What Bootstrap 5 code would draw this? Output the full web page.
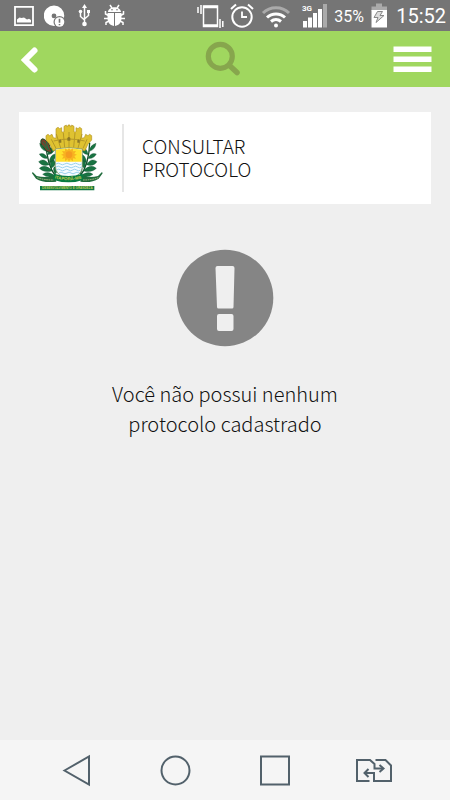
<!DOCTYPE html>
<html lang="pt-BR">
<head>
<meta charset="utf-8">
<meta name="viewport" content="width=device-width, initial-scale=1">
<title>Consultar Protocolo</title>
<link rel="stylesheet" href="https://cdn.jsdelivr.net/npm/bootstrap@5.3.0/dist/css/bootstrap.min.css">
<style>
body{background:#efefef;color:#222;font-family:"Noto Sans CJK SC","Noto Sans",sans-serif}
svg{display:block;flex:none}
.status{background:#757575;color:#fff;height:31px;padding:0 4px 0 14px;font-family:Roboto,sans-serif;line-height:31px}
.status-left{gap:10px}
.status-right{gap:6px}
.battery-level{font-size:16px;width:31px;padding-top:1px}
.clock{font-size:20px;padding-top:1px}
.topbar{background:#a0d75f;height:56px;padding:0 18px}
.panel{margin:25px 19px 0;height:92px;padding:0 12px 0 7px}
.panel-title{font-size:19px;line-height:23px;font-weight:300;color:#111;border-left:2px solid #e6e6e6;margin-left:12px;padding:10px 18px 12px}
.notice{padding-top:45px}
.notice-text{font-size:20px;line-height:30px;font-weight:300;color:#111;max-width:260px;margin-top:32px}
.softkeys{background:#f5f5f5;height:60px;padding:0 27px}
</style>
<script src="https://cdn.jsdelivr.net/npm/bootstrap@5.3.0/dist/js/bootstrap.bundle.min.js" defer></script>
</head>
<body class="d-flex flex-column min-vh-100">

<div class="status d-flex justify-content-between">
  <div class="status-left d-flex">
    <svg width="20" height="31" viewBox="14 0 20 31" fill="#fff" aria-hidden="true"><path d="M15 6.800h18v18.400H15z" fill="none" stroke="#fff" stroke-width="1.800"/><path d="M17 22.500v-3l2.500-2 2 .5 2.500-.5 3 2 2-.8 2 1.300v2.500z"/></svg>
    <svg width="21" height="31" viewBox="44 0 21 31" aria-hidden="true"><path fill="#fff" fill-rule="evenodd" d="M54 5.500a10 10 0 1 0 0 20.500 10 10 0 1 0 0-20.500zM54 13.500a2.400 2.400 0 1 1 0 4.800 2.400 2.400 0 1 1 0-4.800z"/><circle cx="59.500" cy="22" r="6" fill="#757575"/><circle cx="59.500" cy="22" r="4.800" fill="#fff"/><path d="M59.500 18.800v4M59.500 24v1.300" stroke="#757575" stroke-width="1.600"/></svg>
    <svg width="19" height="31" viewBox="75 0 19 31" fill="none" stroke="#fff" stroke-width="1.500" aria-hidden="true"><path d="M84.500 7v17M80.500 12v4.500l4 3.500M88.500 12v3.500l-4 3.500"/><path d="M84.500 4l2.500 4h-5zM87 10h3v3h-3z" fill="#fff" stroke="none"/><circle cx="80.500" cy="11.500" r="1.800" fill="#fff" stroke="none"/><circle cx="84.500" cy="24" r="2.300" fill="#fff" stroke="none"/></svg>
    <svg width="21" height="31" viewBox="104 0 21 31" fill="#fff" aria-hidden="true"><path d="M108 12c.3-6.500 12.700-6.500 13 0zM107.500 13h6.500v13c-4.500-.8-6.500-4-6.500-8zM115 13h6.500v5c0 4-2 7.200-6.500 8z"/><path d="M110 5l2 3M119 5l-2 3M108.500 15.500l-3-1.500v-3M108.500 18.500H104M109 21l-3 1.500v2.500M120.500 15.500l3-1.500v-3M120.500 18.500h4.500M120 21l3 1.500v2.500" fill="none" stroke="#fff" stroke-width="1.500"/><circle cx="112" cy="9.800" r=".8" fill="#757575"/><circle cx="117" cy="9.800" r=".8" fill="#757575"/></svg>
  </div>
  <div class="status-right d-flex">
    <svg width="27" height="31" viewBox="197 0 27 31" fill="none" stroke="#fff" stroke-width="1.500" aria-hidden="true"><rect x="203.500" y="6" width="14" height="20.500"/><path d="M203.500 7h14M203.500 25.500h14" stroke-width="2.500"/><path d="M198 7v6M201 5v9M220 19v9M222.800 21v6"/></svg>
    <svg width="24" height="31" viewBox="230 0 24 31" fill="none" stroke="#fff" stroke-width="2" aria-hidden="true"><circle cx="242" cy="17" r="9.700"/><path d="M242 11.500V17h5" stroke-width="1.800"/><path d="M231 9l5-4.500M253 9l-5-4.500"/></svg>
    <svg width="33" height="31" viewBox="260 0 33 31" fill="none" stroke="#fff" stroke-width="3" aria-hidden="true"><path d="M263 13c7-7 19-7 26 0" stroke="#aaa"/><path d="M267 17.500c5-4.800 13-4.800 18 0M271 21.500c3-2.600 7-2.600 10 0"/><circle cx="276" cy="25.500" r="2" fill="#fff" stroke="none"/></svg>
    <svg width="29" height="31" viewBox="299 0 29 31" fill="#fff" aria-hidden="true"><path d="M303 21h4v6.500h-4zM308 17.500h4v10h-4zM313 13h4v14.500h-4zM318 9h4v18.500h-4z"/><path fill="#aaa" d="M323 4h4v23.500h-4z"/><text x="302" y="11" font-size="8" font-weight="700" font-family="Roboto,sans-serif">3G</text></svg>
    <span class="battery-level">35%</span>
    <svg width="19" height="31" viewBox="370 0 19 31" aria-hidden="true"><path fill="#aaa" d="M375 3.500h6v3h5V11h-15.500V6.500h4.500z"/><path fill="#fff" d="M370.500 10H386v17.500h-15.500z"/><path d="M376.500 11.500h5l-2.500 4h4l-8 7 2-5h-4z" fill="#ddd" stroke="#888" stroke-width="1"/></svg>
    <time class="clock">15:52</time>
  </div>
</div>

<nav class="topbar d-flex align-items-center justify-content-between" aria-label="Principal">
  <button class="btn p-0 border-0" type="button" aria-label="Voltar"><svg width="40" height="40" viewBox="18 39 40 40" fill="none" stroke="#fff" stroke-width="6"><path d="M34.500 50.500L25 60l9.500 9.500" stroke-linecap="round"/></svg></button>
  <button class="btn p-0 border-0" type="button" aria-label="Buscar"><svg width="40" height="40" viewBox="205 39 40 40" fill="none" stroke="#87a64d"><circle cx="220.300" cy="56.300" r="12" stroke-width="5.200"/><path d="M229.500 65.500l7.500 7" stroke-width="5.500" stroke-linecap="round"/></svg></button>
  <button class="btn p-0 border-0" type="button" aria-label="Menu"><svg width="40" height="40" viewBox="392 39 40 40" fill="#fff"><path d="M393.500 46.500h38V52h-38zM393.500 56.500h38V62h-38zM393.500 66.500h38V72h-38z"/></svg></button>
</nav>

<main class="flex-grow-1">
  <section class="panel bg-white d-flex align-items-center">
    <svg width="84" height="74" viewBox="0 0 252 222" role="img" aria-label="Brasão de Itaporã MS">
      <defs>
        <g id="sprig"><path d="M90 167Q62 132 60 65" fill="none" stroke="#174f2c" stroke-width="4"/>
          <g fill="#197342" stroke="#0b4929"><path d="M61 91Q43 86 41 67Q59 72 61 91M64 101Q68 79 87 78Q86 99 64 101M65 112Q48 114 40 99Q56 93 65 112M69 125Q72 101 88 99Q91 119 69 125M70 131Q48 138 38 122Q54 108 70 131M76 142Q66 118 83 116Q96 130 76 142M80 149Q55 157 40 142Q56 127 80 149M87 160Q76 138 90 136Q102 148 87 160M89 166Q66 174 50 160Q65 147 89 166"/></g>
        </g>
      </defs>
      <use href="#sprig"/><use href="#sprig" transform="matrix(-1 0 0 1 251 0)"/>
      <path d="M45 69Q42 49 55 55L68 66 78 96 62 91z" fill="#76402b" stroke="#174f2c" stroke-width="3"/>
      <path d="M51 62l18 25M48 73l17 10M61 63l5 24" stroke="#267044" stroke-width="3"/>
      <path d="M60 44l6-4 5 4 7-4 4 10 8 2V23l6-4 5 4 6-3v13h7V16l7-4v4h5v-4h6v4h5v-4l7 4v17h6V20l6 3 5-4 6 4v29l8-2 4-10 7 4 5-4 6 4v13l-11 12-9 20q-49-8-96 0L71 69 60 57z" fill="#dfc231" stroke="#b59624" stroke-width="2"/>
      <path d="M76 55l14 27M91 39l13 42M112 36l4 43M129 33v46M147 36l-4 43M168 39l-12 42M183 55l-12 27M83 60q46-12 93 0" fill="none" stroke="#b59827" stroke-width="3"/>
      <path d="M124 59v-8q5-6 9 0v8zM99 65v-7q4-5 7 0v7zM154 65v-7q4-5 7 0v7z" fill="#8c7725"/>
      <path d="M88 84q40-8 81 0v52q0 28-40 38-41-10-41-38z" fill="#f5fbff" stroke="#66804b" stroke-width="2"/>
      <path d="M90 86q38-7 77 0v36H90z" fill="#ffe12c"/>
      <path d="M129 80l4 8 8-6v9l9-1-5 8 8 3-8 4 5 8-9-1v9l-8-6-4 8-4-8-8 6v-9l-9 1 5-8-8-4 8-3-5-8 9 1v-9l8 6z" fill="#f8b321"/><circle cx="129" cy="101" r="10" fill="#f49b20"/>
      <path d="M90 129q7-5 13 0t13 0 13 0 13 0 13 0 12 0M90 138q7-5 13 0t13 0 13 0 13 0 13 0 12 0M92 147q6-5 12 0t12 0 12 0 12 0 12 0 12 0M99 156q6-5 12 0t12 0 12 0 12 0 12 0" fill="none" stroke="#9bd2ee" stroke-width="3"/>
      <path d="M20 153l12 12q27 6 54-1l5 18q-39 5-61-9l-12-16zM228 153l-12 12q-25 6-48-1l-5 18q33 5 55-9l12-16z" fill="#216c3d"/>
      <path d="M85 158q43 14 84 0l5 18q-46 16-94 0z" fill="#087b42"/>
      <path id="ribbon" d="M86 172q41 11 86 0" fill="none"/>
      <text font-family="Liberation Sans,sans-serif" font-size="13" font-weight="700" fill="#c4cf50"><textPath href="#ribbon">ITAPORÃ-MS</textPath></text>
      <path d="M34 170q18 7 49 7M217 170q-18 7-46 7" fill="none" stroke="#a9b883" stroke-width="3" stroke-dasharray="5 2"/>
      <path d="M42 195h163v13H42z" fill="#117744"/>
      <text x="124" y="205" text-anchor="middle" font-family="Liberation Sans,sans-serif" font-size="9" font-weight="700" fill="#c4d45b">DESENVOLVIMENTO E GRANDEZA</text>
    </svg>
    <h1 class="panel-title mb-0">CONSULTAR<br>PROTOCOLO</h1>
  </section>

  <section class="notice d-flex flex-column align-items-center text-center">
    <svg width="98" height="98" viewBox="176 249 98 98" aria-hidden="true"><circle cx="225" cy="298" r="48.300" fill="#858585"/><path fill="#efefef" d="M217.500 266h15q2 0 2 2l-1 39q0 1.500-1.500 1.500h-13.500q-1.500 0-1.500-1.500l-1.500-39q0-2 2-2zM219 314h12.500q2 0 2 2v13q0 2-2 2H219q-2 0-2-2v-13q0-2 2-2z"/></svg>
    <p class="notice-text mb-0">Você não possui nenhum protocolo cadastrado</p>
  </section>
</main>

<footer class="softkeys d-flex align-items-center">
  <button class="btn p-0 border-0 d-flex justify-content-center flex-fill" type="button" aria-label="Voltar do sistema"><svg width="40" height="40" viewBox="57 750 40 40" fill="none" stroke="#52616b" stroke-width="2"><path d="M64.500 770.500L89 756.500v28z"/></svg></button>
  <button class="btn p-0 border-0 d-flex justify-content-center flex-fill" type="button" aria-label="Início"><svg width="40" height="40" viewBox="156 750 40 40" fill="none" stroke="#52616b" stroke-width="2"><circle cx="175.500" cy="770.500" r="14"/></svg></button>
  <button class="btn p-0 border-0 d-flex justify-content-center flex-fill" type="button" aria-label="Aplicativos recentes"><svg width="40" height="40" viewBox="255 750 40 40" fill="none" stroke="#52616b" stroke-width="2"><path d="M261 756.500h28v28h-28z"/></svg></button>
  <button class="btn p-0 border-0 d-flex justify-content-center flex-fill" type="button" aria-label="Trocar chip"><svg width="40" height="40" viewBox="354 750 40 40" fill="none" stroke="#52616b" stroke-width="2"><path d="M369.500 781H357v-21h13l4.500 4v4.500h8.500M375.500 760h10l5.500 5.500V781h-17v-8h-9"/><path d="M379.500 765l4 3.500-4 3.500M368.500 769l-4 4 4 4"/></svg></button>
</footer>
</body>
</html>
